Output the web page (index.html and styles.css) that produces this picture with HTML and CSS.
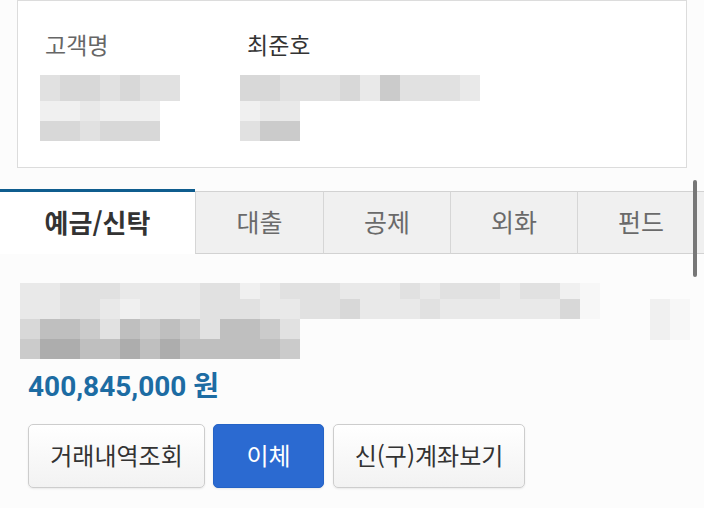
FILE: index.html
```html
<!DOCTYPE html>
<html lang="ko">
  <head>
    <meta charset="UTF-8">
    <meta name="viewport" content="width=device-width, initial-scale=1.0">
    <title>계좌조회</title>
    <link rel="stylesheet" href="styles.css">
  </head>
  <body>
    <div class="card">
      <div class="info-row">
        <div class="label">고객명</div>
        <div class="value">최준호</div>
      </div>
      <div class="info-row blurred">
        <div class="mosaic">
          <div class="row h26">
            <span class="s3"></span><span class="s4"></span><span class="s4"></span><span class="s3"></span><span class="s4"></span><span class="s3"></span><span class="s3"></span>
          </div>
          <div class="row">
            <span class="s1"></span><span class="s1"></span><span class="s2"></span><span class="s1"></span><span class="s1"></span><span class="s1"></span>
          </div>
          <div class="row">
            <span class="s4"></span><span class="s4"></span><span class="s3"></span><span class="s4"></span><span class="s4"></span><span class="s4"></span>
          </div>
        </div>
        <div class="mosaic">
          <div class="row h26">
            <span class="s4"></span><span class="s4"></span><span class="s3"></span><span class="s3"></span><span class="s3"></span><span class="s4"></span><span class="s2"></span><span class="s5"></span><span class="s3"></span><span class="s3"></span><span class="s3"></span><span class="s2"></span>
          </div>
          <div class="row">
            <span class="s1"></span><span class="s2"></span><span class="s2"></span>
          </div>
          <div class="row">
            <span class="s3"></span><span class="s5"></span><span class="s5"></span>
          </div>
        </div>
      </div>
    </div>

    <div class="tabs">
      <div class="tab active">예금/신탁</div>
      <div class="tab">대출</div>
      <div class="tab">공제</div>
      <div class="tab">외화</div>
      <div class="tab">펀드</div>
    </div>
    <div class="scrollbar"></div>

    <div class="account">
      <div class="blur-area">
        <div class="mosaic">
          <div class="row h17">
            <span class="s2"></span><span class="s2"></span><span class="s3"></span><span class="s3"></span><span class="s3"></span><span class="s2"></span><span class="s2"></span><span class="s2"></span><span class="s2"></span><span class="s3"></span><span class="s3"></span><span class="s1"></span><span class="s2"></span><span class="s3"></span><span class="s3"></span><span class="s3"></span><span class="s2"></span><span class="s2"></span><span class="s2"></span><span class="s3"></span><span class="s2"></span><span class="s3"></span><span class="s3"></span><span class="s3"></span><span class="s2"></span><span class="s3"></span><span class="s3"></span><span class="s1"></span><span class="s0"></span>
          </div>
          <div class="row">
            <span class="s2"></span><span class="s2"></span><span class="s3"></span><span class="s3"></span><span class="s2"></span><span class="s1"></span><span class="s2"></span><span class="s2"></span><span class="s2"></span><span class="s3"></span><span class="s3"></span><span class="s3"></span><span class="s2"></span><span class="s2"></span><span class="s3"></span><span class="s3"></span><span class="s4"></span><span class="s2"></span><span class="s2"></span><span class="s2"></span><span class="s3"></span><span class="s2"></span><span class="s2"></span><span class="s2"></span><span class="s2"></span><span class="s2"></span><span class="s2"></span><span class="s4"></span><span class="s0"></span>
          </div>
          <div class="row">
            <span class="s4"></span><span class="s6"></span><span class="s6"></span><span class="s5"></span><span class="s3"></span><span class="s6"></span><span class="s5"></span><span class="s6"></span><span class="s5"></span><span class="s3"></span><span class="s6"></span><span class="s6"></span><span class="s5"></span><span class="s3"></span>
          </div>
          <div class="row">
            <span class="s5"></span><span class="s7"></span><span class="s7"></span><span class="s6"></span><span class="s6"></span><span class="s7"></span><span class="s6"></span><span class="s7"></span><span class="s6"></span><span class="s6"></span><span class="s6"></span><span class="s6"></span><span class="s6"></span><span class="s5"></span>
          </div>
        </div>
        <div class="mosaic side">
          <div class="row h40">
            <span class="s1"></span><span class="s0 half"></span>
          </div>
        </div>
      </div>

      <div class="amount">400,845,000 원</div>

      <div class="actions">
        <button class="btn">거래내역조회</button>
        <button class="btn primary">이체</button>
        <button class="btn">신(구)계좌보기</button>
      </div>
    </div>
  </body>
</html>
```

FILE: styles.css
```css
body {
    margin: 0;
    background-color: #fcfcfc;
    font-family: "Noto Sans CJK KR", "Noto Sans", sans-serif;
    color: #333;
    position: relative;
    height: 508px;
    overflow: hidden;
  }

  .card {
    margin: 0 17px;
    height: 168px;
    box-sizing: border-box;
    border: 1px solid #dcdcdc;
    background-color: #fff;
    padding: 22px 0 0 22px;
  }

  .info-row {
    display: flex;
  }

  .info-row > div:first-child {
    width: 200px;
    flex-shrink: 0;
  }

  .label,
  .value {
    font-size: 23px;
    line-height: 42px;
  }

  .label {
    color: #666;
    padding-left: 5px;
  }

  .value {
    color: #333;
    padding-left: 2px;
  }

  .blurred {
    margin-top: 10px;
  }

  /* pixelated blur blocks */
  .mosaic .row {
    display: flex;
    height: 20px;
  }

  .mosaic .row span {
    width: 20px;
    height: 100%;
  }

  .mosaic .h26 { height: 26px; }
  .mosaic .h17 { height: 16px; }
  .mosaic .h40 { height: 41px; }
  .mosaic .half { width: 10px; }

  .s0 { background-color: #f7f7f7; }
  .s1 { background-color: #f0f0f0; }
  .s2 { background-color: #e9e9e9; }
  .s3 { background-color: #e1e1e1; }
  .s4 { background-color: #d8d8d8; }
  .s5 { background-color: #cbcbcb; }
  .s6 { background-color: #bfbfbf; }
  .s7 { background-color: #adadad; }

  .tabs {
    display: flex;
    margin-top: 21px;
    height: 65px;
  }

  .tab {
    width: 127px;
    box-sizing: border-box;
    display: flex;
    align-items: center;
    justify-content: center;
    font-size: 25px;
    color: #6a6a6a;
    background-color: #f0f0f0;
    border-top: 1px solid #d2d2d2;
    border-bottom: 1px solid #d2d2d2;
    border-left: 1px solid #d6d6d6;
    margin-top: 2px;
    padding-bottom: 3px;
  }

  .tab:nth-child(2) {
    width: 128px;
  }

  .tab.active {
    width: 195px;
    margin-top: 0;
    background-color: #fff;
    border: none;
    border-top: 3px solid #0f5d8e;
    font-weight: bold;
    font-size: 26px;
    color: #333;
  }

  .scrollbar {
    position: absolute;
    left: 693px;
    top: 180px;
    width: 4px;
    height: 97px;
    border-radius: 2px;
    background-color: #777;
  }

  .account {
    padding: 29px 0 0 20px;
  }

  .blur-area {
    display: flex;
  }

  .side {
    margin-left: auto;
    margin-right: 14px;
    margin-top: 16px;
  }

  .amount {
    margin: 10px 0 0 8px;
    font-family: Roboto, "Noto Sans CJK KR", sans-serif;
    font-size: 28px;
    line-height: 36px;
    font-weight: bold;
    color: #1d6ca3;
  }

  .actions {
    display: flex;
    gap: 8px;
    margin: 19px 0 0 8px;
  }

  .btn {
    height: 64px;
    padding: 0 10px 3px;
    font-family: "Noto Sans CJK KR", sans-serif;
    font-size: 24px;
    color: #333;
    background: linear-gradient(#ffffff, #f2f2f2);
    border: 1px solid #cdcdcd;
    border-radius: 5px;
    box-shadow: 0 1px 2px rgba(0, 0, 0, 0.08);
  }

  .btn:first-child {
    width: 177px;
  }

  .btn.primary {
    width: 111px;
    margin-right: 1px;
    color: #fff;
    background: #2b6ad1;
    border-color: #2563c6;
  }

  .btn:last-child {
    width: 192px;
  }
```
